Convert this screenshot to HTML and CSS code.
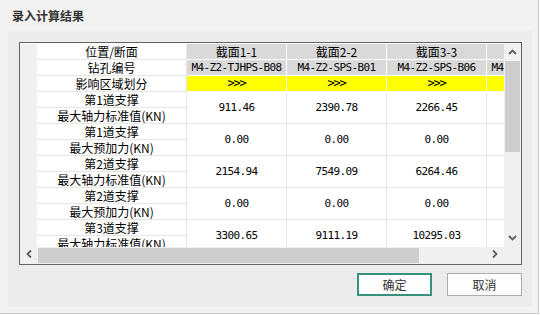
FILE: index.html
```html
<!DOCTYPE html>
<html lang="zh-CN">
<head>
    <meta charset="UTF-8">
    <title>录入计算结果</title>
    <link rel="stylesheet" href="styles.css">
</head>
<body>
    <div class="dialog">
        <div class="title">录入计算结果</div>
        <div class="panel">
            <div class="gridbox">
                <div class="viewport">
                    <div class="sheet">
                        <div class="rh"></div>
                        <div class="lb">位置/断面</div>
                        <div class="hd">截面1-1</div>
                        <div class="hd">截面2-2</div>
                        <div class="hd">截面3-3</div>
                        <div class="hd"></div>

                        <div class="rh"></div>
                        <div class="lb">钻孔编号</div>
                        <div class="hd mono">M4-Z2-TJHPS-B08</div>
                        <div class="hd mono">M4-Z2-SPS-B01</div>
                        <div class="hd mono">M4-Z2-SPS-B06</div>
                        <div class="hd mono">M4-Z2-TJHPS-B10</div>

                        <div class="rh"></div>
                        <div class="lb">影响区域划分</div>
                        <div class="zone mono">&gt;&gt;&gt;</div>
                        <div class="zone mono">&gt;&gt;&gt;</div>
                        <div class="zone mono">&gt;&gt;&gt;</div>
                        <div class="zone mono"></div>

                        <div class="rh two"></div>
                        <div class="lb">第1道支撑</div>
                        <div class="val mono">911.46</div>
                        <div class="val mono">2390.78</div>
                        <div class="val mono">2266.45</div>
                        <div class="val mono"></div>
                        <div class="lb">最大轴力标准值(KN)</div>

                        <div class="rh two"></div>
                        <div class="lb">第1道支撑</div>
                        <div class="val mono">0.00</div>
                        <div class="val mono">0.00</div>
                        <div class="val mono">0.00</div>
                        <div class="val mono"></div>
                        <div class="lb">最大预加力(KN)</div>

                        <div class="rh two"></div>
                        <div class="lb">第2道支撑</div>
                        <div class="val mono">2154.94</div>
                        <div class="val mono">7549.09</div>
                        <div class="val mono">6264.46</div>
                        <div class="val mono"></div>
                        <div class="lb">最大轴力标准值(KN)</div>

                        <div class="rh two"></div>
                        <div class="lb">第2道支撑</div>
                        <div class="val mono">0.00</div>
                        <div class="val mono">0.00</div>
                        <div class="val mono">0.00</div>
                        <div class="val mono"></div>
                        <div class="lb">最大预加力(KN)</div>

                        <div class="rh two"></div>
                        <div class="lb">第3道支撑</div>
                        <div class="val mono">3300.65</div>
                        <div class="val mono">9111.19</div>
                        <div class="val mono">10295.03</div>
                        <div class="val mono"></div>
                        <div class="lb">最大轴力标准值(KN)</div>
                    </div>
                </div>
                <div class="vscroll">
                    <div class="arrow">
                        <svg width="17" height="17"><polyline points="5,11 8.5,7.5 12,11" /></svg>
                    </div>
                    <div class="vtrack"><div class="vthumb"></div></div>
                    <div class="arrow">
                        <svg width="17" height="17"><polyline points="5,6 8.5,9.5 12,6" /></svg>
                    </div>
                </div>
                <div class="hscroll">
                    <div class="arrow">
                        <svg width="17" height="17"><polyline points="11,3.5 7.5,7 11,10.5" /></svg>
                    </div>
                    <div class="htrack"><div class="hthumb"></div></div>
                    <div class="arrow">
                        <svg width="17" height="17"><polyline points="6,3.5 9.5,7 6,10.5" /></svg>
                    </div>
                </div>
                <div class="corner"></div>
            </div>
            <div class="actions">
                <button class="btn primary">确定</button>
                <button class="btn">取消</button>
            </div>
        </div>
    </div>
</body>
</html>
```

FILE: styles.css
```css
* { box-sizing: border-box; }
body { margin: 0; background: #fff; font-family: "Noto Sans CJK SC", sans-serif; font-size: 12px; color: #000; }

.dialog { width: 539px; height: 314px; background: #f2f2f2; border-right: 1px solid #c8c8c8; border-bottom: 1px solid #c8c8c8; }
.title { height: 31px; padding-left: 12px; display: flex; align-items: center; font-weight: bold; font-size: 12px; color: #333; }
.panel { margin-left: 8px; width: 524px; height: 276px; background: #ececec; padding: 11px 10px 0 11px; }

.gridbox { display: grid; grid-template-columns: 484px 17px; grid-template-rows: 204px 17px; border: 1px solid #646464; background: #fff; }
.viewport { overflow: hidden; padding-top: 1px; background: #fff; }

.sheet { display: grid; grid-template-columns: 17px 150px repeat(4, 100px); grid-auto-rows: 16px; width: max-content; }
.sheet > div { border-right: 1px solid #e6e6e6; border-bottom: 1px solid #e6e6e6; display: flex; align-items: center; justify-content: center; white-space: nowrap; overflow: hidden; line-height: 15px; }
.sheet > .rh { background: #f0f0f0; border-color: #f0f0f0; }
.sheet > .two { grid-row: span 2; }
.sheet > .hd { background: #d9d9d9; border-color: #fff; }
.sheet > .zone { background: #ffff00; border-color: #fff; font-size: 12px; letter-spacing: -1.2px; }
.sheet > .val { grid-row: span 2; }
.mono { font-family: "DejaVu Sans Mono", monospace; font-size: 11px; letter-spacing: -0.62px; }

.vscroll { display: flex; flex-direction: column; background: #f0f0f0; }
.hscroll { display: flex; background: #f0f0f0; }
.arrow { width: 17px; height: 17px; flex: none; }
.arrow polyline { fill: none; stroke: #606060; stroke-width: 1.8; }
.vtrack { flex: 1; padding: 1px 1px 0; }
.vthumb { width: 15px; height: 91px; background: #cdcdcd; }
.htrack { flex: 1; padding: 1px 0 0 1px; }
.hthumb { width: 381px; height: 15px; background: #cdcdcd; }
.corner { background: #f0f0f0; }

.actions { display: flex; justify-content: flex-end; gap: 15px; margin-top: 8px; }
.btn { width: 75px; height: 23px; background: #fdfdfd; border: 1px solid #adadad; font-family: "Noto Sans CJK SC", sans-serif; font-size: 12px; color: #333; padding: 0; }
.btn.primary { border: 2px solid #36917f; }
```
